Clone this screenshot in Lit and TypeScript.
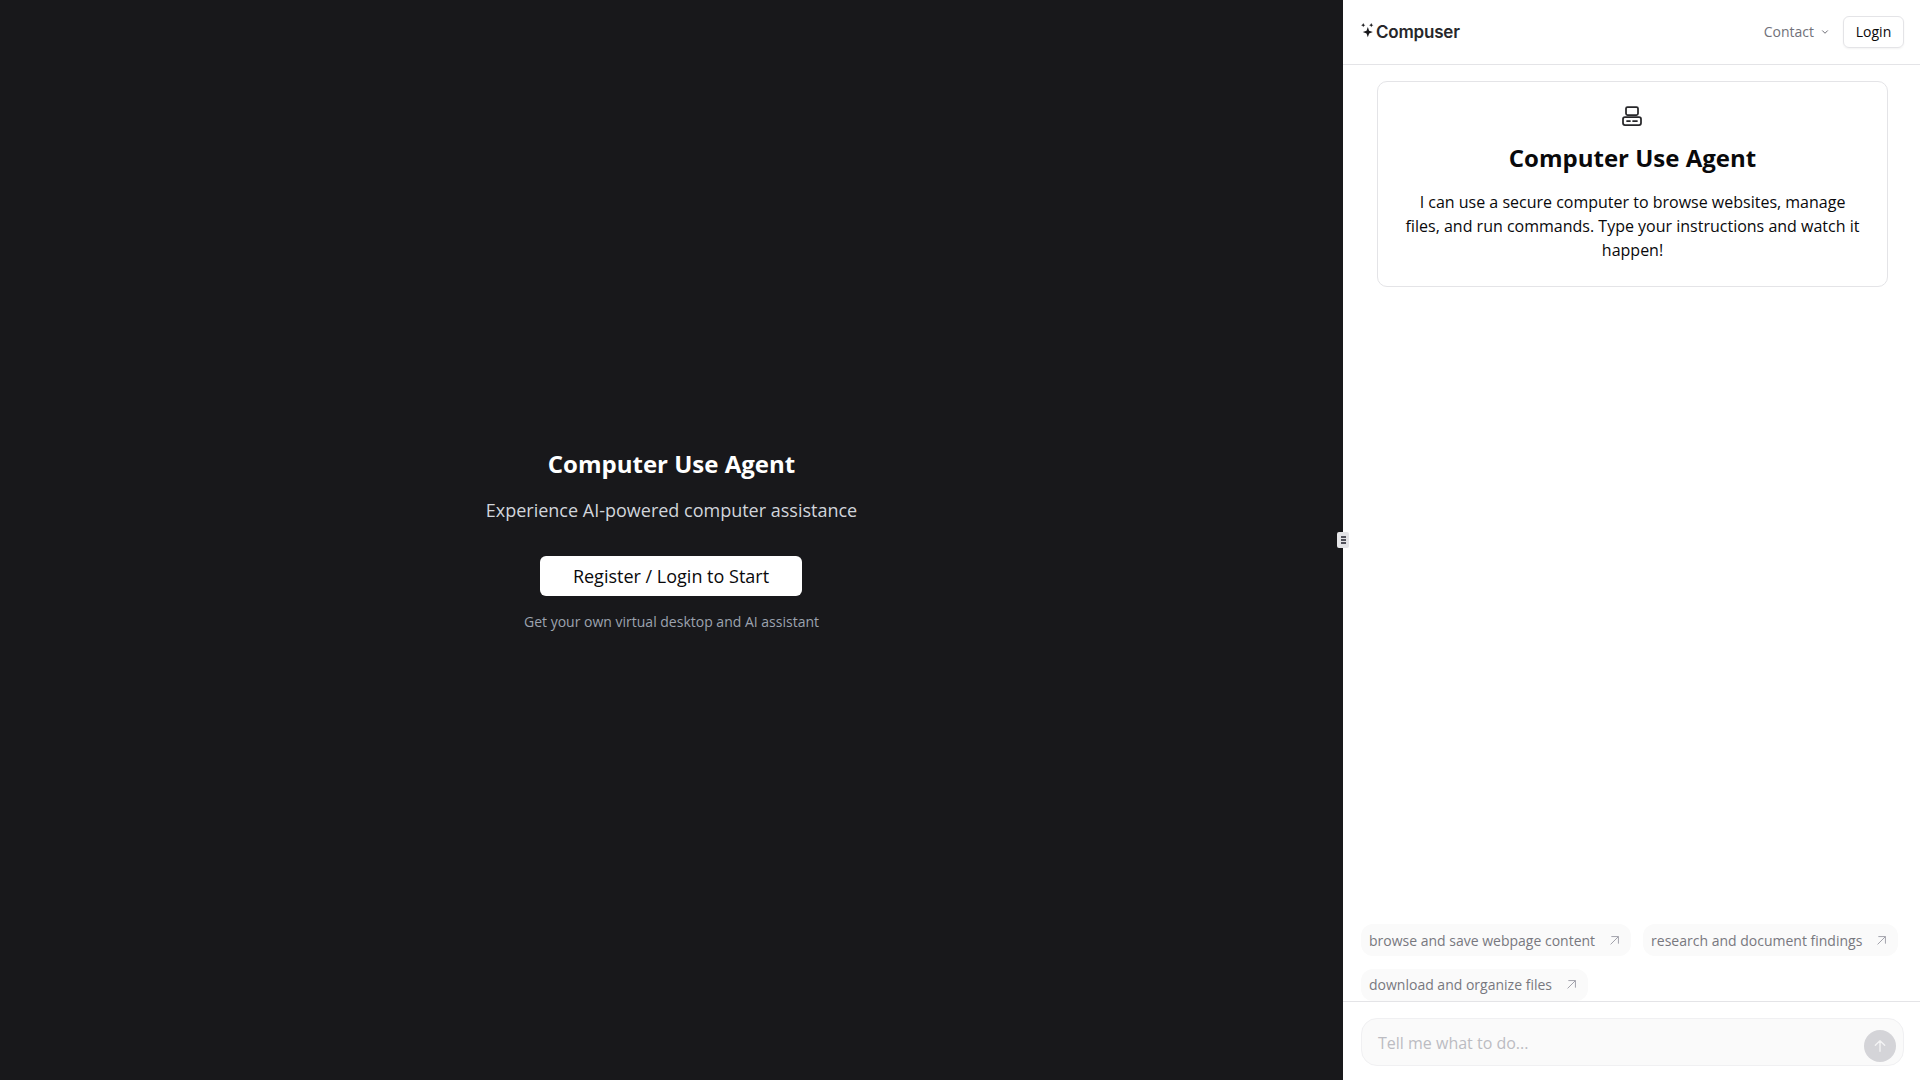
import { LitElement, html, css, svg } from "lit";
import { customElement } from "lit/decorators.js";

const arrow = svg`<path d="M7 17 17 7M8 7h9v9"/>`;

@customElement("app-root")
export class AppRoot extends LitElement {
  static styles = css`
    :host { display: flex; width: 100%; height: 100vh; overflow: hidden; font-family: "Open Sans", sans-serif; color: #09090b; background: #fff; }
    * { box-sizing: border-box; }
    .left { width: 1343px; flex: none; background: #18181b; display: flex; flex-direction: column; align-items: center; justify-content: center; color: #fff; }
    .left h2 { margin: 0; font-size: 24px; line-height: 32px; font-weight: 700; }
    .left .sub { margin: 16px 0 0; font-size: 18px; line-height: 28px; color: #d1d5db; }
    .start { margin: 32px 1px 0 0; width: 262px; height: 40px; border-radius: 6px; background: #fff; color: #09090b; font-size: 18px; display: flex; align-items: center; justify-content: center; }
    .left .note { margin: 16px 0 0; font-size: 14px; line-height: 20px; color: #9ca3af; }
    .handle-wrap { position: relative; width: 0; z-index: 2; }
    .handle { position: absolute; left: -6px; top: 532px; width: 12px; height: 16px; border-radius: 2px; background: #e4e4e7; display: flex; flex-direction: column; align-items: center; justify-content: center; gap: 1px; }
    .handle i { display: block; width: 5px; height: 2px; background: #52525b; }
    .right { flex: 1; min-width: 0; display: flex; flex-direction: column; height: 100vh; }
    header { height: 65px; flex: none; border-bottom: 1px solid #e4e4e7; display: flex; align-items: center; justify-content: space-between; padding: 0 16px 1px 18px; }
    .logo { display: flex; align-items: center; gap: 2px; font-family: Inter, sans-serif; font-weight: 600; font-size: 17px; letter-spacing: -0.2px; color: #27272a; }
    .logo svg { width: 13px; height: 15px; margin-top: -3px; }
    .nav { display: flex; align-items: center; }
    .contact { display: flex; align-items: center; gap: 6px; font-size: 14px; color: #71717a; margin-right: 13px; }
    .contact svg { width: 10px; height: 10px; fill: none; stroke: #52525b; stroke-width: 2; stroke-linecap: round; stroke-linejoin: round; margin-top: 1px; }
    .login { width: 61px; height: 32px; border: 1px solid #e4e4e7; border-radius: 6px; font-size: 14px; display: flex; align-items: center; justify-content: center; box-shadow: 0 1px 2px rgba(0,0,0,.05); }
    .messages { flex: 1; min-height: 0; padding: 16px 32px 0 34px; }
    .card { height: 206px; border: 1px solid #e4e4e7; border-radius: 10px; padding: 22px 24px 0; display: flex; flex-direction: column; align-items: center; text-align: center; }
    .card svg { width: 24px; height: 24px; margin-right: 1px; fill: none; stroke: #27272a; stroke-width: 1.75; stroke-linecap: round; stroke-linejoin: round; }
    .card h1 { margin: 14px 0 0; font-size: 24px; line-height: 32px; font-weight: 700; color: #09090b; }
    .card p { margin: 16px 0 0; font-size: 16px; line-height: 24px; }
    .chips { flex: none; display: flex; flex-wrap: wrap; gap: 12px; padding: 0 16px 0 18px; height: 77px; overflow: hidden; }
    .chip { height: 32px; border-radius: 12px; background: #fafafa; color: #78787f; font-size: 14px; display: flex; align-items: center; gap: 13px; padding: 0 10px 0 8px; }
    .chip svg { width: 13px; height: 13px; padding: 1px; fill: none; stroke: #a1a1aa; stroke-width: 1.25; }
    .form { flex: none; height: 79px; border-top: 1px solid #e4e4e7; padding: 16px 16px 0 18px; }
    .input { position: relative; height: 48px; border: 1px solid #f0f0f2; border-radius: 16px; background: #fafafa; color: #bcbcc2; font-size: 16px; line-height: 24px; padding: 12px 16px; }
    .send { position: absolute; right: 7px; top: 11px; width: 32px; height: 32px; border-radius: 50%; background: #d4d4d8; display: flex; align-items: center; justify-content: center; }
    .send svg { width: 16px; height: 16px; fill: none; stroke: #f4f4f5; stroke-width: 2; stroke-linecap: round; stroke-linejoin: round; }
  `;

  render() {
    const chip = (t: string) => html`<div class="chip">${t}<svg viewBox="5 5 14 14">${arrow}</svg></div>`;
    return html`
      <section class="left">
        <h2>Computer Use Agent</h2>
        <p class="sub">Experience AI-powered computer assistance</p>
        <div class="start">Register / Login to Start</div>
        <p class="note">Get your own virtual desktop and AI assistant</p>
      </section>
      <div class="handle-wrap"><div class="handle"><i></i><i></i><i></i></div></div>
      <section class="right">
        <header>
          <div class="logo">
            <svg viewBox="0 0 12 14"><path fill="#18181b" d="M6.300 3.800 7.500 7.300 11 8.500 7.500 9.700 6.300 13.200 5.100 9.700 1.600 8.500 5.100 7.300ZM2 0 2.600 1.400 4 2 2.600 2.600 2 4 1.400 2.600 0 2 1.400 1.400ZM9.500 0 10.100 1.400 11.500 2 10.100 2.600 9.500 4 8.900 2.600 7.500 2 8.900 1.400Z"/></svg>
            Compuser
          </div>
          <div class="nav">
            <div class="contact">Contact <svg viewBox="0 0 24 24"><path d="m6 9 6 6 6-6"/></svg></div>
            <div class="login">Login</div>
          </div>
        </header>
        <div class="messages">
          <div class="card">
            <svg viewBox="0 0 24 24"><rect x="6" y="3" width="12" height="8" rx="1.500"/><rect x="3" y="13" width="18" height="8" rx="2"/><path d="M7 17h3M13 17h4"/></svg>
            <h1>Computer Use Agent</h1>
            <p>I can use a secure computer to browse websites, manage files, and run commands. Type your instructions and watch it happen!</p>
          </div>
        </div>
        <div class="chips">
          ${chip("browse and save webpage content")}
          ${chip("research and document findings")}
          ${chip("download and organize files")}
        </div>
        <div class="form">
          <div class="input">Tell me what to do...
            <div class="send"><svg viewBox="0 0 24 24"><path d="M12 20V4M5 11l7-7 7 7"/></svg></div>
          </div>
        </div>
      </section>
    `;
  }
}
